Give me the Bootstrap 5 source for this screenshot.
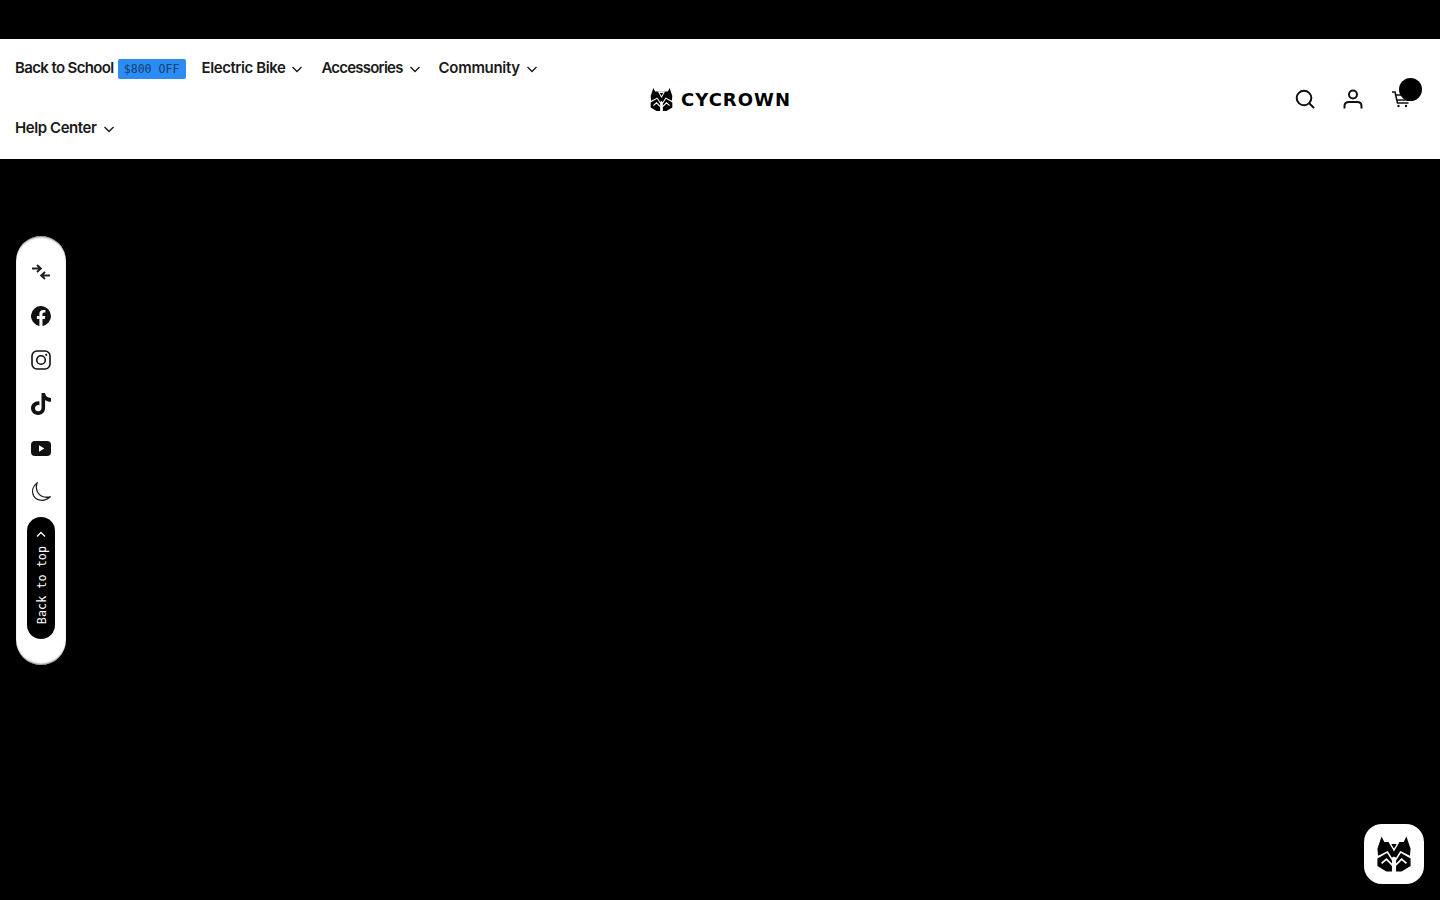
<!DOCTYPE html>
<html lang="en">
<head>
<meta charset="utf-8">
<title>Cycrown</title>
<link href="https://cdn.jsdelivr.net/npm/bootstrap@5.3.0/dist/css/bootstrap.min.css" rel="stylesheet">
<style>
html,body{height:100%;}
body{background:#000;font-family:Inter,"Liberation Sans",sans-serif;overflow:hidden;}
.topstrip{height:39px;background:#000;}
.site-head{height:120px;background:#fff;display:grid;grid-template-columns:1fr 140px 1fr;color:#1a1a1a;}
.head-nav{width:560px;padding-left:15px;flex-wrap:wrap;}
.head-link{height:60px;padding-bottom:1px;display:flex;align-items:center;margin-right:16px;font-size:15px;font-weight:600;letter-spacing:-.42px;color:#1a1a1a;text-decoration:none;white-space:nowrap;}
.tight-a{letter-spacing:-.63px;}
.tight-b{letter-spacing:-.78px;}
.loose-c{letter-spacing:-.3px;}
.chev{width:10px;height:7px;margin-left:7px;margin-right:3px;margin-top:2px;}
.promo{background:#2b8cf3;color:#123f75;font-family:"DejaVu Sans Mono",monospace;font-size:11.6px;letter-spacing:0;font-weight:400;line-height:20px;height:20px;padding:0 6px;border-radius:2px;margin-left:4px;margin-top:1px;}
.brand-box{gap:8px;color:#000;text-decoration:none;}
.brand-word{font-family:"DejaVu Sans",sans-serif;font-weight:700;font-size:18px;line-height:1;letter-spacing:1px;margin-right:-1px;padding-top:1px;}
.head-tools{padding-right:29px;gap:28px;justify-content:flex-end;}
.tool-btn{width:20px;height:40px;position:relative;color:#111;}
.cart-dot{position:absolute;left:8px;top:-1px;width:23px;height:23px;border-radius:50%;background:#000;}
.side-rail{position:fixed;left:16px;top:236px;width:50px;height:429px;background:#fff;border-radius:25px;padding:14px 11px 25px;box-shadow:inset 0 2px 2px -1px #777,inset 0 -2px 2px -1px #777;}
.rail-cell{height:44px;}
.top-pill{height:122px;width:28px;margin-top:3px;border-radius:14px;background:#000;color:#fff;padding:14px 0 15px;}
.top-text{writing-mode:vertical-rl;transform:rotate(180deg);font-family:"DejaVu Sans Mono",monospace;font-size:11.8px;line-height:1;margin-left:3px;}
.chat-tile{position:fixed;left:1364px;top:824px;width:60px;height:60px;border-radius:18px;background:#fff;}
</style>
</head>
<body>
<svg width="0" height="0" class="position-absolute">
  <defs>
    <symbol id="mask-logo" viewBox="15 10 102 110">
      <path fill="#000" d="M30 14L38 30H94L102 14L114 50L112 70L84 56L72 76L66 72L60 76L48 56L20 70L18 50Z"/>
      <path fill="#fff" d="M50 30H82L66 58Z"/>
      <path fill="#000" d="M58 36H74L66 49Z"/>
      <path fill="#000" d="M18 78L46 62L60 84V116H44L18 100Z"/>
      <path fill="#000" d="M114 78L86 62L72 84V116H88L114 100Z"/>
      <path fill="none" stroke="#fff" stroke-width="5" d="M30 92L44 80L62 98M102 92L88 80L70 98"/>
    </symbol>
  </defs>
</svg>
<div class="topstrip"></div>
<header class="site-head">
  <nav class="head-nav d-flex align-content-start">
    <a class="head-link tight-a" href="#">Back to School<span class="promo">$800 OFF</span></a>
    <a class="head-link" href="#">Electric Bike<svg class="chev" viewBox="0 0 10 7" fill="none" stroke="#1a1a1a" stroke-width="1.4"><path d="M.5 1l4.500 4.500L9.500 1"/></svg></a>
    <a class="head-link tight-b" href="#">Accessories<svg class="chev" viewBox="0 0 10 7" fill="none" stroke="#1a1a1a" stroke-width="1.4"><path d="M.5 1l4.500 4.500L9.500 1"/></svg></a>
    <a class="head-link loose-c" href="#">Community<svg class="chev" viewBox="0 0 10 7" fill="none" stroke="#1a1a1a" stroke-width="1.4"><path d="M.5 1l4.500 4.500L9.500 1"/></svg></a>
    <a class="head-link" href="#">Help Center<svg class="chev" viewBox="0 0 10 7" fill="none" stroke="#1a1a1a" stroke-width="1.4"><path d="M.5 1l4.500 4.500L9.500 1"/></svg></a>
  </nav>
  <a class="brand-box d-flex align-items-center justify-content-center" href="#">
    <svg width="23" height="25"><use href="#mask-logo"/></svg>
    <span class="brand-word">CYCROWN</span>
  </a>
  <div class="head-tools d-flex align-items-center">
    <div class="tool-btn d-flex align-items-center justify-content-center"><svg width="20" height="20" viewBox="0 0 20 20" fill="none" stroke="#111" stroke-width="2"><circle cx="9" cy="9" r="7.300"/><path d="M14.500 14.500l4.500 4.500"/></svg></div>
    <div class="tool-btn d-flex align-items-center justify-content-center"><svg width="20" height="20" viewBox="0 0 20 20" fill="none" stroke="#111" stroke-width="2"><circle cx="10" cy="5.500" r="4"/><path d="M1.500 19.500v-2.500c0-2.500 2-4 4.500-4h8c2.500 0 4.500 1.500 4.500 4v2.500"/></svg></div>
    <div class="tool-btn d-flex align-items-center justify-content-center"><svg width="20" height="20" viewBox="0 0 20 20" fill="none" stroke="#111" stroke-width="1.600"><path d="M1 3h3l2.500 11h11"/><path d="M4.500 6H18l-1 5H6"/><circle cx="7.500" cy="17" r="1.200" fill="#111" stroke="none"/><circle cx="15" cy="17" r="1.200" fill="#111" stroke="none"/></svg><span class="cart-dot"></span></div>
  </div>
</header>

<aside class="side-rail d-flex flex-column align-items-center">
  <div class="rail-cell d-flex align-items-center justify-content-center"><svg width="18" height="16" viewBox="0 0 18 16" fill="none" stroke="#222" stroke-width="2"><path d="M0 4.500h8.500M5 1l3.800 3.500L5 8"/><path d="M18 11.500H9.500M13 8l-3.800 3.500L13 15"/></svg></div>
  <div class="rail-cell d-flex align-items-center justify-content-center"><svg width="20" height="20" viewBox="0 0 20 20"><path fill="#111" d="M20 10a10 10 0 1 0-11.600 9.900v-7H5.900V10h2.500V7.800c0-2.500 1.500-3.900 3.800-3.900 1.100 0 2.200.2 2.200.2v2.500h-1.300c-1.200 0-1.600.8-1.600 1.600V10h2.800l-.5 2.900h-2.300v7A10 10 0 0 0 20 10z"/></svg></div>
  <div class="rail-cell d-flex align-items-center justify-content-center"><svg width="20" height="20" viewBox="0 0 20 20" fill="none" stroke="#111" stroke-width="1.600"><rect x="1" y="1" width="18" height="18" rx="5"/><circle cx="10" cy="10" r="4.300"/><circle cx="15.200" cy="4.800" r="1.100" fill="#111" stroke="none"/></svg></div>
  <div class="rail-cell d-flex align-items-center justify-content-center"><svg width="20" height="22" viewBox="0 0 20 22"><path fill="#111" d="M10.500 0h3.600c.3 2.900 2 4.700 5.900 4.900v3.900c-2.300.1-4.300-.6-5.900-1.800v8c0 4.100-3 7-7 7C2.900 22 0 18.900 0 15.100c0-4.200 3.700-7.300 8.400-6.800v3.900c-2.400-.5-4.400 1-4.400 3 0 1.800 1.400 3.100 3 3.100 1.900 0 3.500-1.300 3.500-3.400z"/></svg></div>
  <div class="rail-cell d-flex align-items-center justify-content-center"><svg width="20" height="15" viewBox="0 0 20 15"><rect width="20" height="15" rx="4" fill="#111"/><path d="M8 4.300v6.400l5.300-3.200z" fill="#fff"/></svg></div>
  <div class="rail-cell d-flex align-items-center justify-content-center"><svg width="20" height="20" viewBox="0 0 20 20" fill="none" stroke="#222" stroke-width="1.300"><path d="M6 1C2 4 .5 9 2.500 13.500 5 18.500 13 20.500 19 15 13 16 8.500 13.500 6.500 10 5 7 5 4 6 1Z"/></svg></div>
  <a class="top-pill d-flex flex-column align-items-center text-decoration-none" href="#">
    <svg width="10" height="6" viewBox="0 0 10 6" fill="none" stroke="#fff" stroke-width="1.300"><path d="M1 5.500l4-4 4 4"/></svg>
    <span class="top-text mt-auto">Back to top</span>
  </a>
</aside>

<a class="chat-tile d-flex align-items-center justify-content-center" href="#" aria-label="Chat">
  <svg width="36" height="38"><use href="#mask-logo"/></svg>
</a>
<script src="https://cdn.jsdelivr.net/npm/bootstrap@5.3.0/dist/js/bootstrap.bundle.min.js"></script>
</body>
</html>
